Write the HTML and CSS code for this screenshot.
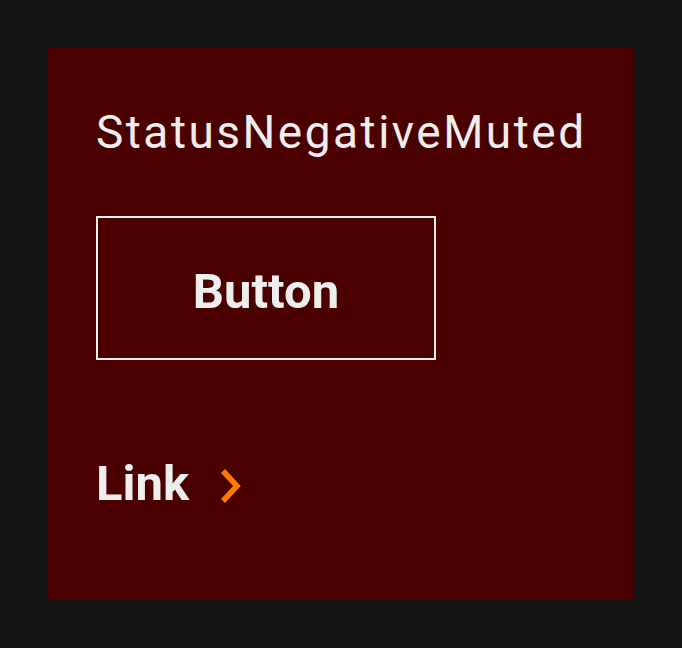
FILE: index.html
```html
<!DOCTYPE html>
<html>
<head>
<meta charset="utf-8">
<link rel="stylesheet" href="styles.css">
</head>
<body>
<div class="panel">
  <div class="title">StatusNegativeMuted</div>
  <button class="btn">Button</button>
  <a class="link" href="#"><span>Link</span><svg class="chev" width="26" height="36" viewBox="0 0 26 36"><path d="M4 3 L18 18 L4 33" fill="none" stroke="#ff7a00" stroke-width="5.5"/></svg></a>
</div>
</body>
</html>
```
FILE: styles.css
```css
html, body { margin: 0; padding: 0; }
body {
  background: #141414;
  width: 682px;
  height: 648px;
  padding: 48px;
  box-sizing: border-box;
  font-family: Roboto, "Liberation Sans", sans-serif;
}
.panel {
  background: #4b0000;
  width: 586px;
  height: 552px;
  box-sizing: border-box;
  padding: 52px 48px 0 48px;
  display: flex;
  flex-direction: column;
  align-items: flex-start;
  color: #eeeeee;
}
.title {
  font-size: 46px;
  line-height: 64px;
  font-weight: 400;
  letter-spacing: 2.5px;
}
.btn {
  margin-top: 52px;
  width: 340px;
  height: 144px;
  background: transparent;
  border: 2px solid #f0f0f0;
  color: #eeeeee;
  font-family: inherit;
  font-size: 49px;
  font-weight: 700;
  padding: 6px 0 0 0;
}
.link {
  margin-top: 96px;
  color: #eeeeee;
  text-decoration: none;
  font-size: 49px;
  font-weight: 700;
  line-height: 56px;
  display: flex;
  align-items: center;
  gap: 30px;
}
.chev { display: block; margin-top: 4px; }
```
